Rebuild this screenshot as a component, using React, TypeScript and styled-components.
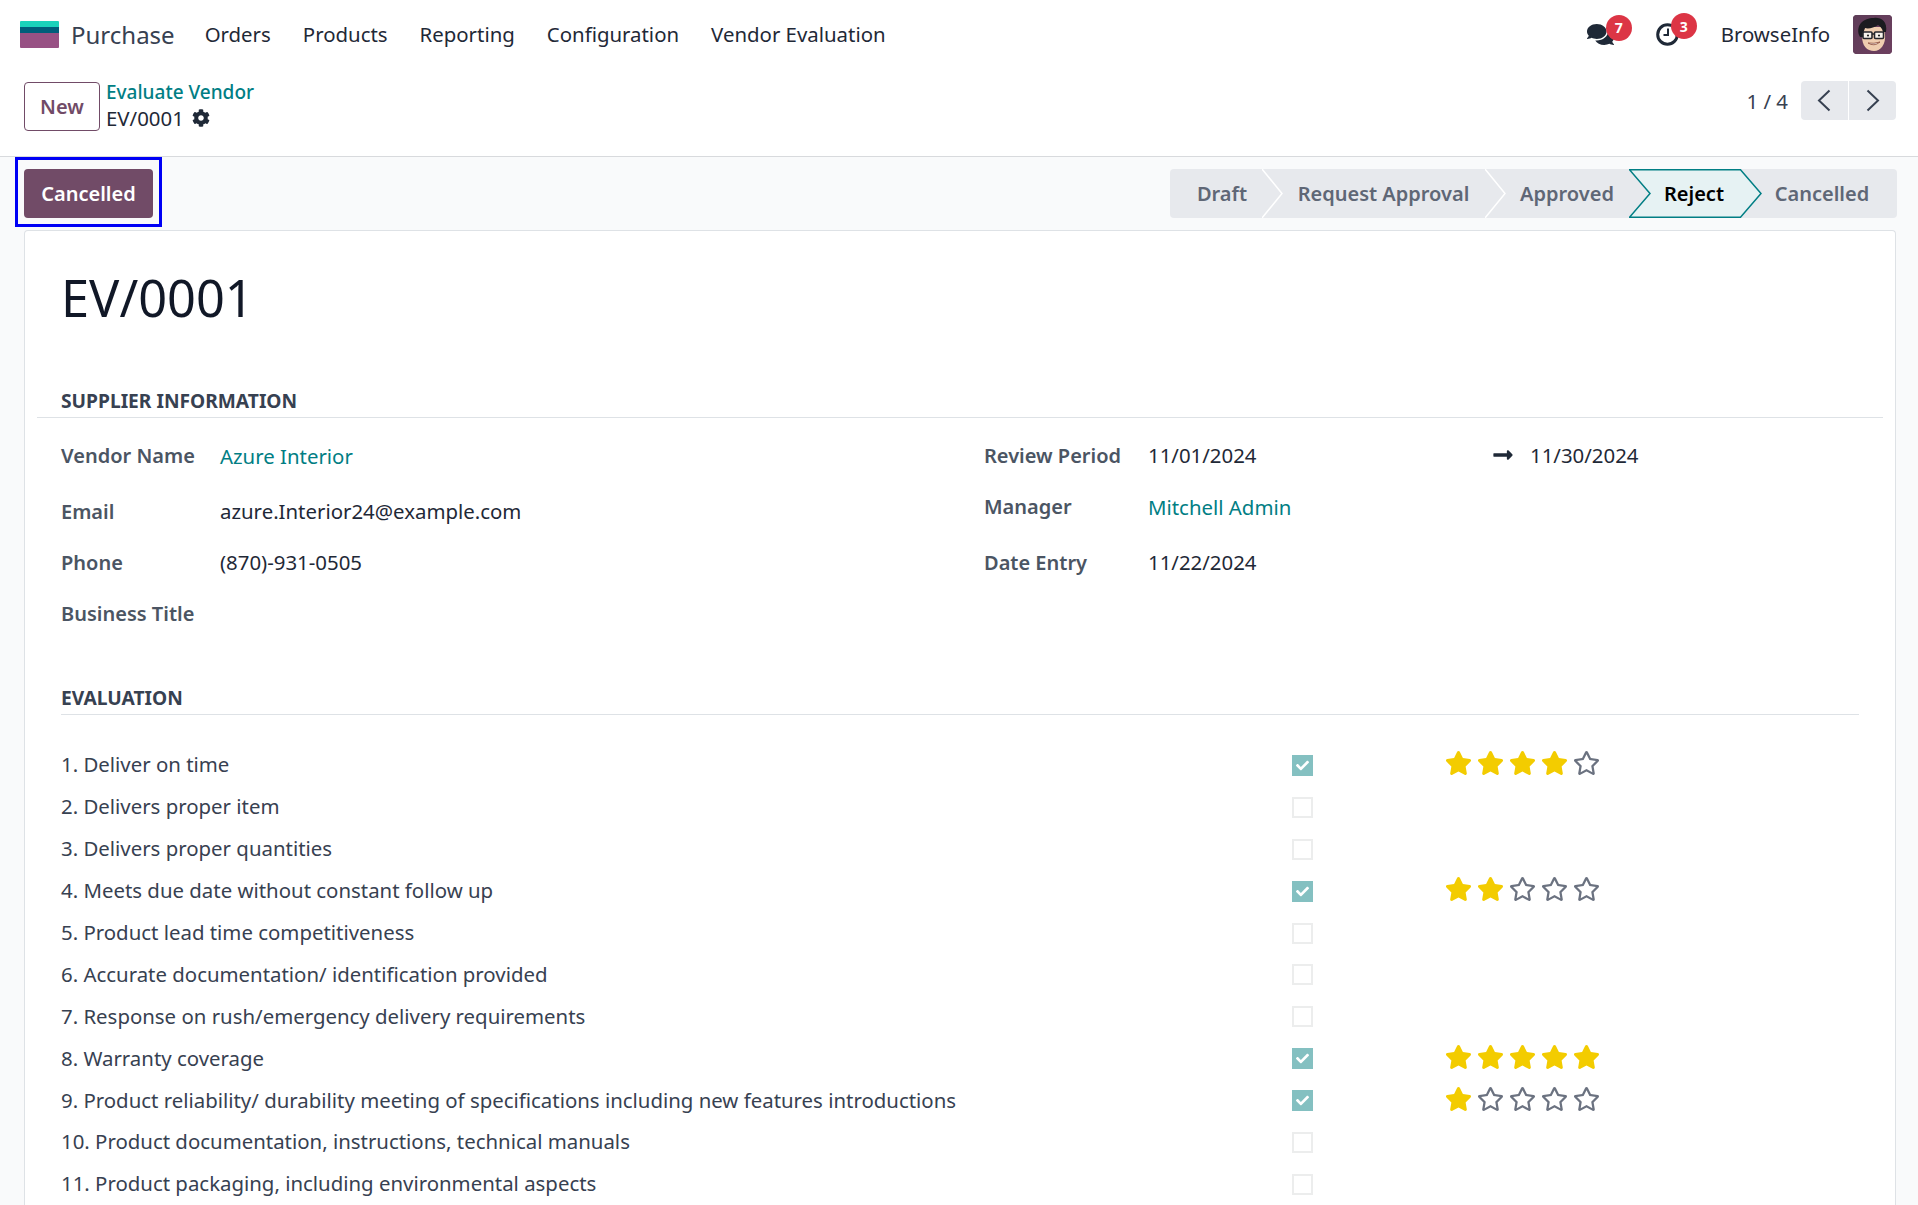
import React from 'react'
import styled, { createGlobalStyle } from 'styled-components'
import { FaComments, FaCog, FaStar, FaRegStar, FaLongArrowAltRight, FaCheck } from 'react-icons/fa'

const Global = createGlobalStyle`
  html, body { margin: 0; padding: 0; height: 100%; overflow: hidden; }
  body { background: #f9fafb; font-family: "Noto Sans", "Open Sans", sans-serif; color: #374151; font-size: 20.4px; }
  * { box-sizing: border-box; }
`

const Page = styled.div`
  width: 1918px;
  height: 1205px;
  overflow: hidden;
  display: flex;
  flex-direction: column;
`

const TopArea = styled.div`
  height: 157px;
  flex: none;
  background: #fff;
  border-bottom: 1px solid #d8dadd;
  display: flex;
  flex-direction: column;
`

const Navbar = styled.nav`
  height: 68px;
  flex: none;
  display: flex;
  align-items: center;
  padding: 0 26px 0 20px;
`

const Logo = styled.div`
  width: 39px;
  height: 27px;
  margin-right: 12px;
  border-radius: 1px;
  background: linear-gradient(#1ad3bb 0 24%, #005e7a 24% 46%, #985184 46% 100%);
`

const AppName = styled.span`
  font-size: 24px;
  color: #374151;
  margin-right: 30px;
`

const MenuItem = styled.a`
  color: #1f2937;
  font-size: 20.4px;
  margin-right: 32px;
`

const NavRight = styled.div`
  margin-left: auto;
  display: flex;
  align-items: center;
`

const NavIcon = styled.div<{ $gap: number }>`
  position: relative;
  display: flex;
  align-items: center;
  margin-right: ${p => p.$gap}px;
  color: #1f2937;
`

const Badge = styled.span<{ $left: number; $top: number }>`
  position: absolute;
  top: ${p => p.$top}px;
  left: ${p => p.$left}px;
  width: 26px;
  height: 26px;
  border-radius: 50%;
  background: #dc3545;
  color: #fff;
  font-size: 14px;
  font-weight: 700;
  display: flex;
  align-items: center;
  justify-content: center;
`

const UserName = styled.span`
  color: #1f2937;
  margin-right: 23px;
`

const Avatar = styled.div`
  width: 39px;
  height: 39px;
  border-radius: 4px;
  overflow: hidden;
  background: #5b3a55;
`

const ControlPanel = styled.div`
  flex: 1;
  display: flex;
  align-items: flex-start;
  padding: 14px 22px 0 24px;
`

const NewButton = styled.button`
  width: 76px;
  height: 49px;
  background: #fff;
  border: 1px solid #714b67;
  border-radius: 4px;
  color: #714b67;
  font: 600 20px "Noto Sans", sans-serif;
  margin-right: 6px;
  padding: 0;
`

const Breadcrumb = styled.div`
  display: flex;
  flex-direction: column;
  margin-top: -2px;
  line-height: 26px;
`

const CrumbLink = styled.a`
  color: #017e84;
  font-weight: 500;
  font-size: 19px;
  line-height: 25px;
`

const CrumbCurrent = styled.div`
  display: flex;
  align-items: center;
  gap: 8px;
  color: #1f2937;
`

const Pager = styled.div`
  margin: -1px 0 0 auto;
  display: flex;
  align-items: center;
  height: 39px;
`

const PagerText = styled.span`
  color: #374151;
  margin-right: 13px;
`

const PagerButton = styled.button<{ $left?: boolean }>`
  width: 47px;
  height: 39px;
  border: 0;
  background: #e7e9ed;
  padding: 0;
  margin-left: ${p => (p.$left ? 0 : 1)}px;
  border-radius: ${p => (p.$left ? '4px 0 0 4px' : '0 4px 4px 0')};
  display: flex;
  align-items: center;
  justify-content: center;
  color: #374151;
`

const StatusRow = styled.div`
  flex: none;
  height: 73px;
  display: flex;
  align-items: center;
  justify-content: space-between;
  padding: 0 21px 0 24px;
`

const CancelButton = styled.button`
  position: relative;
  width: 129px;
  height: 49px;
  border: 0;
  border-radius: 4px;
  background: #714b67;
  color: #fff;
  font: 600 20px "Noto Sans", sans-serif;
  padding: 0;

  &::after {
    content: "";
    position: absolute;
    inset: -12px -9px -9px -9px;
    border: 3px solid #0000f5;
  }
`

const StatusBar = styled.div`
  display: flex;
  height: 49px;
  width: 727px;
  background: #e7e9ed;
  border-radius: 4px;
  position: relative;
`

const Step = styled.div<{ $width: number; $pad: number; $active?: boolean }>`
  position: relative;
  width: ${p => p.$width}px;
  padding-left: ${p => p.$pad}px;
  display: flex;
  align-items: center;
  justify-content: center;
  font-size: 20px;
  font-weight: 600;
  color: ${p => (p.$active ? '#000' : '#5f6776')};
  z-index: ${p => (p.$active ? 2 : 1)};
`

const Chevron = styled.svg`
  position: absolute;
  top: 0;
  right: -21px;
  width: 21px;
  height: 49px;
`

const ActiveShape = styled.svg`
  position: absolute;
  top: 0;
  left: 0;
  width: 133px;
  height: 49px;
  z-index: -1;
`

const Sheet = styled.main`
  flex: 1;
  margin: 0 22px 0 24px;
  background: #fff;
  border: 1px solid #dee2e6;
  border-bottom: 0;
  border-radius: 4px 4px 0 0;
  padding: 0 12px;
`

const Title = styled.h1`
  margin: 0;
  padding: 33px 0 0 24px;
  height: 156px;
  font-size: 50.500px;
  font-weight: 400;
  line-height: 68px;
  color: #111827;
`

const SectionHead = styled.h2<{ $indent?: boolean }>`
  margin: ${p => (p.$indent ? '0 24px 0 24px' : '0')};
  padding: 0 0 2px ${p => (p.$indent ? 0 : 24)}px;
  font-size: 19.200px;
  line-height: 28px;
  height: 31px;
  font-weight: 700;
  color: #374151;
  border-bottom: 1px solid #dee2e6;
`

const InfoGrid = styled.div`
  display: grid;
  grid-template-columns: 923px 1fr;
  padding: 16px 0 0 24px;
`

const Column = styled.div`
  display: flex;
  flex-direction: column;
`

const Field = styled.div<{ $top?: number; $label: number }>`
  display: grid;
  grid-template-columns: ${p => p.$label}px 1fr;
  height: 42px;
  margin-top: ${p => p.$top || 0}px;
  align-items: center;
  color: #1f2937;
`

const FieldLabel = styled.span`
  font-weight: 600;
  font-size: 20px;
  color: #4b5563;
`

const Link = styled.a`
  color: #017e84;
  margin-top: 2px;
`

const DateRange = styled.div`
  display: flex;
  align-items: center;
`

const DateFrom = styled.span`
  width: 382px;
  display: flex;
  justify-content: space-between;
  align-items: center;
  padding-right: 16px;
`

const Evaluation = styled.section`
  margin-top: 50px;
`

const Rows = styled.div`
  padding: 28.500px 0 0 24px;
`

const Row = styled.div`
  display: grid;
  grid-template-columns: 1231px 153px 1fr;
  height: 41.900px;
  align-items: center;
  color: #374151;
`

const Check = styled.span<{ $on?: boolean }>`
  width: 21px;
  height: 21px;
  margin-top: 2px;
  display: flex;
  align-items: center;
  justify-content: center;
  background: ${p => (p.$on ? '#84c0c1' : '#fff')};
  border: ${p => (p.$on ? '0' : '2px solid #eceded')};
  color: #fff;
`

const Stars = styled.div`
  display: flex;
  gap: 5px;
  margin-top: -2px;
`

const FullStar = styled(FaStar)`
  width: 27px;
  height: 26px;
  color: #f3cc00;
`

const EmptyStar = styled(FaRegStar)`
  width: 27px;
  height: 26px;
  color: #6b7280;
`

const criteria: [string, number][] = [
  ['1. Deliver on time', 4],
  ['2. Delivers proper item', 0],
  ['3. Delivers proper quantities', 0],
  ['4. Meets due date without constant follow up', 2],
  ['5. Product lead time competitiveness', 0],
  ['6. Accurate documentation/ identification provided', 0],
  ['7. Response on rush/emergency delivery requirements', 0],
  ['8. Warranty coverage', 5],
  ['9. Product reliability/ durability meeting of specifications including new features introductions', 1],
  ['10. Product documentation, instructions, technical manuals', 0],
  ['11. Product packaging, including environmental aspects', 0],
]

const steps = [
  { name: 'Draft', width: 92, pad: 12 },
  { name: 'Request Approval', width: 223, pad: 20 },
  { name: 'Approved', width: 144, pad: 20 },
  { name: 'Reject', width: 112, pad: 18, active: true },
  { name: 'Cancelled', width: 156, pad: 6 },
]

const Face = () => (
  <svg viewBox="0 0 39 39" width="39" height="39">
    <defs>
      <linearGradient id="avatarBg" x1="0" y1="0" x2="1" y2="1">
        <stop offset="0" stopColor="#5e3d58" />
        <stop offset="1" stopColor="#6d3f5f" />
      </linearGradient>
    </defs>
    <rect width="39" height="39" fill="url(#avatarBg)" />
    <path d="M9 21 C9 31 14 36 21 36 C28 36 33 29 32 19 L30 12 L12 12 Z" fill="#efcdb0" />
    <path d="M6 20 C3 10 10 3 21 3 C27 2 35 6 33 17 L30 17 C29 13 27 11 25 10 C21 13 15 14 12 13 C11 16 10 18 10 22 L7 22 Z" fill="#1b1b20" />
    <rect x="10" y="17" width="9" height="6.500" rx="1" fill="#f8f3ec" stroke="#26262b" strokeWidth="1.600" />
    <rect x="21.500" y="17" width="9" height="6.500" rx="1" fill="#f8f3ec" stroke="#26262b" strokeWidth="1.600" />
    <path d="M19 19H21.500" stroke="#26262b" strokeWidth="1.400" />
    <circle cx="15" cy="20.500" r="1.100" fill="#222" />
    <circle cx="26" cy="20.500" r="1.100" fill="#222" />
    <path d="M15 28 Q21 32 27 27 Q21 29 15 28Z" fill="#fff" stroke="#8a4a3a" strokeWidth="0.800" />
  </svg>
)

const Clock = () => (
  <svg width="23" height="24" viewBox="0 0 23 24" fill="none" stroke="currentColor">
    <circle cx="11.500" cy="12.500" r="9.800" strokeWidth="3" />
    <path d="M12 6.500V13H7.500" strokeWidth="2" />
  </svg>
)

const Left = () => (
  <svg width="15" height="23" viewBox="0 0 15 23" fill="none" stroke="currentColor" strokeWidth="2">
    <path d="M12.500 1.500 2 11.500l10.500 10" />
  </svg>
)

const Right = () => (
  <svg width="15" height="23" viewBox="0 0 15 23" fill="none" stroke="currentColor" strokeWidth="2">
    <path d="M2.500 1.500 13 11.500 2.500 21.500" />
  </svg>
)

const App = () => {
  return (
    <Page>
      <Global />
      <TopArea>
        <Navbar>
          <Logo />
          <AppName>Purchase</AppName>
          <MenuItem>Orders</MenuItem>
          <MenuItem>Products</MenuItem>
          <MenuItem>Reporting</MenuItem>
          <MenuItem>Configuration</MenuItem>
          <MenuItem>Vendor Evaluation</MenuItem>
          <NavRight>
            <NavIcon $gap={42}>
              <FaComments size={27} />
              <Badge $left={19} $top={-6}>7</Badge>
            </NavIcon>
            <NavIcon $gap={42}>
              <Clock />
              <Badge $left={15} $top={-9}>3</Badge>
            </NavIcon>
            <UserName>BrowseInfo</UserName>
            <Avatar>
              <Face />
            </Avatar>
          </NavRight>
        </Navbar>
        <ControlPanel>
          <NewButton>New</NewButton>
          <Breadcrumb>
            <CrumbLink>Evaluate Vendor</CrumbLink>
            <CrumbCurrent>
              EV/0001 <FaCog size={18} />
            </CrumbCurrent>
          </Breadcrumb>
          <Pager>
            <PagerText>1 / 4</PagerText>
            <PagerButton $left>
              <Left />
            </PagerButton>
            <PagerButton>
              <Right />
            </PagerButton>
          </Pager>
        </ControlPanel>
      </TopArea>
      <StatusRow>
        <CancelButton>Cancelled</CancelButton>
        <StatusBar>
          {steps.map((s, i) => (
            <Step key={s.name} $width={s.width} $pad={s.pad} $active={s.active}>
              {s.active && (
                <ActiveShape viewBox="0 0 133 49">
                  <path d="M.5 .75H111.500L132 24.500 111.500 48.250H.5L21 24.500Z" fill="#e6f2f3" stroke="#017e84" strokeWidth="1.500" />
                </ActiveShape>
              )}
              {s.name}
              {i < 2 && (
                <Chevron viewBox="0 0 21 49" fill="none" stroke="#fff" strokeWidth="1.500">
                  <path d="M0 0 20 24.500 0 49" />
                </Chevron>
              )}
            </Step>
          ))}
        </StatusBar>
      </StatusRow>
      <Sheet>
        <Title>EV/0001</Title>
        <SectionHead>SUPPLIER INFORMATION</SectionHead>
        <InfoGrid>
          <Column>
            <Field $label={159}>
              <FieldLabel>Vendor Name</FieldLabel>
              <Link>Azure Interior</Link>
            </Field>
            <Field $label={159} $top={14}>
              <FieldLabel>Email</FieldLabel>
              <span>azure.Interior24@example.com</span>
            </Field>
            <Field $label={159} $top={9}>
              <FieldLabel>Phone</FieldLabel>
              <span>(870)-931-0505</span>
            </Field>
            <Field $label={159} $top={9}>
              <FieldLabel>Business Title</FieldLabel>
              <span />
            </Field>
          </Column>
          <Column>
            <Field $label={164}>
              <FieldLabel>Review Period</FieldLabel>
              <DateRange>
                <DateFrom>
                  11/01/2024 <FaLongArrowAltRight size={22} />
                </DateFrom>
                <span>11/30/2024</span>
              </DateRange>
            </Field>
            <Field $label={164} $top={9}>
              <FieldLabel>Manager</FieldLabel>
              <Link>Mitchell Admin</Link>
            </Field>
            <Field $label={164} $top={14}>
              <FieldLabel>Date Entry</FieldLabel>
              <span>11/22/2024</span>
            </Field>
          </Column>
        </InfoGrid>
        <Evaluation>
          <SectionHead $indent>EVALUATION</SectionHead>
          <Rows>
            {criteria.map(([label, rating]) => (
              <Row key={label}>
                <span>{label}</span>
                <Check $on={rating > 0}>{rating > 0 && <FaCheck size={13} />}</Check>
                {rating > 0 ? (
                  <Stars>
                    {[1, 2, 3, 4, 5].map(n => (n <= rating ? <FullStar key={n} /> : <EmptyStar key={n} />))}
                  </Stars>
                ) : (
                  <span />
                )}
              </Row>
            ))}
          </Rows>
        </Evaluation>
      </Sheet>
    </Page>
  )
}

export default App
